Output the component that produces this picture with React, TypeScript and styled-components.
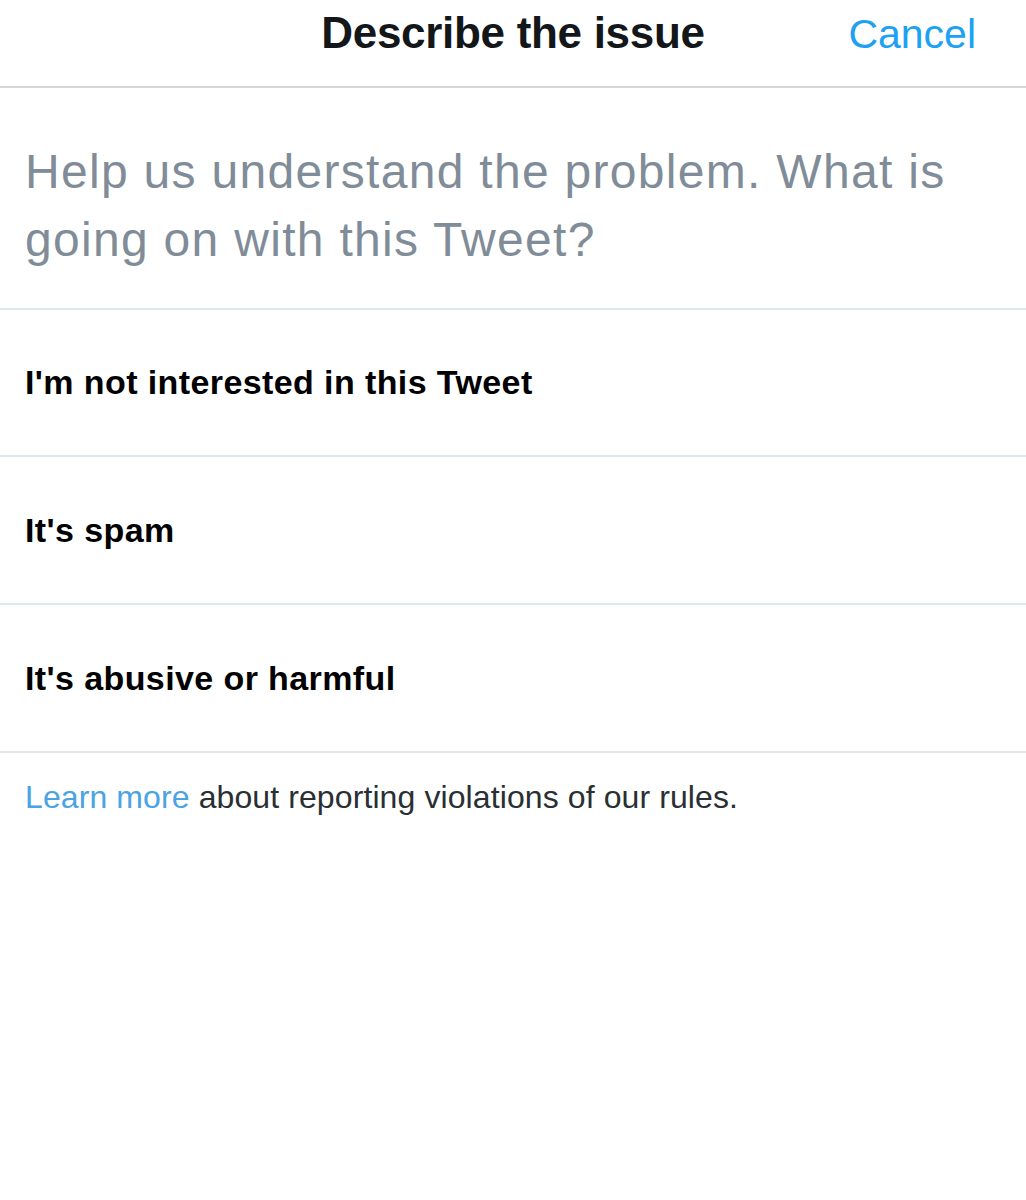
import React from 'react';
import styled, { createGlobalStyle } from 'styled-components';

const GlobalStyle = createGlobalStyle`
  html, body {
    margin: 0;
    padding: 0;
    background: #ffffff;
  }
  body {
    font-family: 'Liberation Sans', Arial, Helvetica, sans-serif;
    -webkit-font-smoothing: antialiased;
  }
`;

const Screen = styled.div`
  width: 1026px;
  min-height: 1200px;
  background: #ffffff;
  display: flex;
  flex-direction: column;
`;

const Header = styled.header`
  display: grid;
  grid-template-columns: 1fr auto 1fr;
  align-items: baseline;
  height: 88px;
  box-sizing: border-box;
  padding: 11px 50px 0 50px;
  border-bottom: 2px solid #d6d6d9;
`;

const Title = styled.h1`
  grid-column: 2;
  margin: 0;
  font-size: 44px;
  line-height: 44px;
  font-weight: 700;
  letter-spacing: -0.3px;
  color: #14171a;
`;

const CancelButton = styled.button`
  grid-column: 3;
  justify-self: end;
  background: none;
  border: none;
  padding: 0;
  font-family: inherit;
  font-size: 41px;
  line-height: 44px;
  color: #1da1f2;
  cursor: pointer;
`;

const Intro = styled.p`
  margin: 0;
  padding: 50px 40px 34px 25px;
  font-size: 48px;
  line-height: 68px;
  letter-spacing: 1.3px;
  font-weight: 400;
  color: #808c98;
  border-bottom: 2px solid #e1e8ed;
`;

const OptionList = styled.ul`
  list-style: none;
  margin: 0;
  padding: 0;
`;

const Option = styled.li`
  display: flex;
  align-items: center;
  height: 147px;
  box-sizing: border-box;
  padding: 0 25px;
  border-bottom: 2px solid #e1e8ed;
  font-size: 34px;
  font-weight: 700;
  letter-spacing: 0.4px;
  color: #000000;
  cursor: pointer;

  &:not(:first-child) {
    height: 148px;
  }
`;

const Footer = styled.p`
  margin: 0;
  padding: 25px 25px 0 25px;
  font-size: 32px;
  line-height: 38px;
  letter-spacing: 0.1px;
  color: #292f33;
`;

const LearnMore = styled.a`
  color: #4aa3e2;
  text-decoration: none;
`;

const options = [
  "I'm not interested in this Tweet",
  "It's spam",
  "It's abusive or harmful",
];

export default function App() {
  return (
    <Screen>
      <GlobalStyle />
      <Header>
        <Title>Describe the issue</Title>
        <CancelButton>Cancel</CancelButton>
      </Header>
      <Intro>Help us understand the problem. What is going on with this Tweet?</Intro>
      <OptionList>
        {options.map((label) => (
          <Option key={label}>{label}</Option>
        ))}
      </OptionList>
      <Footer>
        <LearnMore href="#">Learn more</LearnMore> about reporting violations of our rules.
      </Footer>
    </Screen>
  );
}
